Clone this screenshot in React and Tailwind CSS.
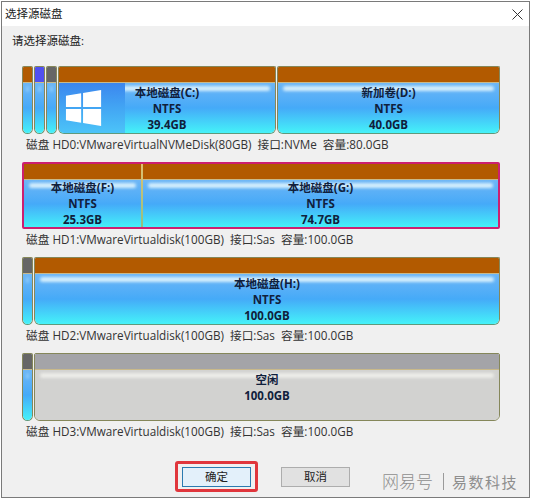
const FONT = "font-['Open_Sans','Noto_Sans_CJK_SC',sans-serif]";

function Partition({ width, head = "bg-[#b25a00]", free, lines = [], logo, narrow, selected }) {
    let glow = "left-[5px] right-[5px] h-[5px] bg-[#d4eefc]";
    if (narrow) glow = "left-[3px] right-[3px] h-[6px] bg-[#8ccaf9]";
    if (free) glow = "left-[5px] right-[5px] h-[5px] bg-[#ecece8]";

    return (
        <div
            className={
                "relative flex shrink-0 flex-col overflow-hidden " +
                (selected
                    ? ""
                    : "rounded-t-[2px] rounded-b-[6px] border border-[#85875a] ") +
                (!selected && !free ? "border-b-[#5f9a7c] " : "") +
                width
            }
        >
            <div className={"h-[16px] shrink-0 border-b border-[#c9b98a] " + head}></div>
            <div
                className={
                    "relative flex flex-1 flex-col items-center justify-end " +
                    (free
                        ? "bg-[#d2d2d0] pb-[16px]"
                        : "bg-gradient-to-b from-[#6db6f6] via-[#45aaf8] to-[#45f2f8]")
                }
            >
                <div className={"absolute top-[3px] rounded-full blur-[1.5px] " + glow}></div>
                {logo && (
                    <div className="absolute inset-y-0 left-0 flex w-[66px] items-center justify-start bg-gradient-to-b from-[#3c86ee] to-[#4cc4f8] pl-[6px]">
                        <svg width="38" height="38" viewBox="0 0 40 38" className="fill-white">
                            <path d="M1 6 L17 3.5 V18 H1 Z" />
                            <path d="M19 3.2 L38 0 V18 H19 Z" />
                            <path d="M1 20 H17 V34.5 L1 32 Z" />
                            <path d="M19 20 H38 V38 L19 34.8 Z" />
                        </svg>
                    </div>
                )}
                <div className="relative z-10 flex flex-col items-center text-[11.5px] leading-[16px] font-bold text-[#10203c]">
                    {lines.map((t) => (
                        <span key={t}>{t}</span>
                    ))}
                </div>
            </div>
        </div>
    );
}

function DiskRow({ children, label, className, selected }) {
    return (
        <div className={className}>
            <div
                className={
                    "flex w-[478px] " +
                    (selected
                        ? "h-[67px] gap-[2px] rounded-[2px] border-[2.5px] border-[#cc1f70] bg-gradient-to-b from-[#e0c070] to-[#90c080]"
                        : "h-[68px] gap-[1px]")
                }
            >
                {children}
            </div>
            <div className="flex h-[20px] items-center pt-[2px] pl-[4px] text-[11.7px] whitespace-pre text-[#333]">
                {label}
            </div>
        </div>
    );
}

export default function App() {
    return (
        <div className="h-[500px] w-[534px] bg-white pt-[1px] pl-[1px]">
            <div className={"flex h-[497px] w-[529px] flex-col border border-[#7a7a7a] bg-white text-[#222] " + FONT}>
                <div className="flex h-[24px] shrink-0 items-center justify-between pr-[6px] pl-[3px] text-[11.5px]">
                    <span>选择源磁盘</span>
                    <svg width="11" height="11" viewBox="0 0 11 11" className="stroke-[#333]">
                        <path d="M0.5 0.5 L10.5 10.5 M10.5 0.5 L0.5 10.5" strokeWidth="1" />
                    </svg>
                </div>
                <div className="relative flex flex-1 flex-col bg-[#f0f0f0] pl-[20px]">
                    <div className="mt-[7px] -ml-[10px] h-[16px] text-[11.5px] leading-[16px]">请选择源磁盘:</div>

                    <DiskRow className="mt-[17px]" label="磁盘 HD0:VMwareVirtualNVMeDisk(80GB)  接口:NVMe  容量:80.0GB">
                        <Partition width="w-[11px]" narrow />
                        <Partition width="w-[11px]" head="bg-[#5050f0]" narrow />
                        <Partition width="w-[11px]" head="bg-[#666666]" narrow />
                        <Partition width="w-[218px]" logo lines={["本地磁盘(C:)", "NTFS", "39.4GB"]} />
                        <Partition width="flex-1" lines={["新加卷(D:)", "NTFS", "40.0GB"]} />
                    </DiskRow>

                    <DiskRow selected className="mt-[8px]" label="磁盘 HD1:VMwareVirtualdisk(100GB)  接口:Sas  容量:100.0GB">
                        <Partition selected width="w-[117px]" lines={["本地磁盘(F:)", "NTFS", "25.3GB"]} />
                        <Partition selected width="flex-1" lines={["本地磁盘(G:)", "NTFS", "74.7GB"]} />
                    </DiskRow>

                    <DiskRow className="mt-[8px]" label="磁盘 HD2:VMwareVirtualdisk(100GB)  接口:Sas  容量:100.0GB">
                        <Partition width="w-[11px]" head="bg-[#666666]" narrow />
                        <Partition width="flex-1" lines={["本地磁盘(H:)", "NTFS", "100.0GB"]} />
                    </DiskRow>

                    <DiskRow className="mt-[8px]" label="磁盘 HD3:VMwareVirtualdisk(100GB)  接口:Sas  容量:100.0GB">
                        <Partition width="w-[11px]" head="bg-[#666666]" narrow />
                        <Partition width="flex-1" head="bg-[#a4a4a8]" free lines={["空闲", "100.0GB"]} />
                    </DiskRow>

                    <div className="mt-[20px] ml-[153px] flex items-center">
                        <div className="rounded-[3px] border-[3px] border-[#e0363c] px-[4px] py-[2.5px]">
                            <button className="block h-[20px] w-[69px] border border-[#2a7ab0] bg-[#e3f0fa] text-[11.5px] leading-none">
                                确定
                            </button>
                        </div>
                        <button className="ml-[23px] h-[20px] w-[69px] border border-[#adadad] bg-[#e1e1e1] text-[11.5px] leading-none">
                            取消
                        </button>
                    </div>

                    <div className="absolute right-[11px] bottom-[7px] flex items-center text-[#8e8e8e]">
                        <span className="text-[17px] leading-none font-light">网易号</span>
                        <span className="mr-[8px] ml-[10px] h-[17px] w-px bg-[#9a9a9a]"></span>
                        <span className="text-[15px] leading-none tracking-[1.5px] font-['Noto_Sans_CJK_SC',sans-serif]">易数科技</span>
                    </div>
                </div>
            </div>
        </div>
    );
}
